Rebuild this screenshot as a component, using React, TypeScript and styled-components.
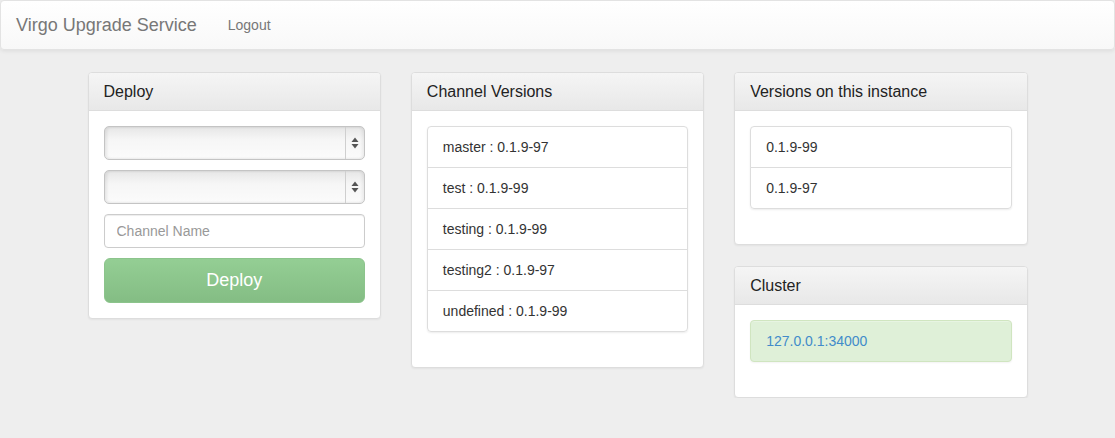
import * as React from "react";
import styled, { createGlobalStyle } from "styled-components";

const GlobalStyle = createGlobalStyle`
  body {
    margin: 0;
    background: #eeeeee;
    font-family: "Liberation Sans", Arial, sans-serif;
    font-size: 14px;
    color: #333;
  }
`;

const Navbar = styled.nav`
  display: flex;
  align-items: center;
  height: 48px;
  margin-bottom: 22px;
  border: 1px solid #e3e3e3;
  border-radius: 4px;
  background: linear-gradient(#ffffff, #f8f8f8);
  box-shadow: 0 1px 4px rgba(0, 0, 0, 0.08), inset 0 1px 0 rgba(255, 255, 255, 0.15);
`;

const Brand = styled.a`
  padding: 0 16px 0 15px;
  font-size: 18px;
  color: #777;
  text-decoration: none;
`;

const NavLink = styled.a`
  padding: 0 15px;
  font-size: 14px;
  color: #777;
  text-decoration: none;
`;

const Container = styled.div`
  width: 940px;
  margin: 0 auto;
  display: grid;
  grid-template-columns: repeat(3, 1fr);
  column-gap: 30px;
  align-items: start;
`;

const Column = styled.div`
  display: flex;
  flex-direction: column;
  gap: 21px;
`;

const Panel = styled.section`
  background: #fff;
  border: 1px solid #dddddd;
  border-radius: 4px;
  box-shadow: 0 1px 2px rgba(0, 0, 0, 0.05);
`;

const PanelHeading = styled.div`
  padding: 10px 15px;
  border-bottom: 1px solid #dddddd;
  border-radius: 3px 3px 0 0;
  background: linear-gradient(#f5f5f5, #e8e8e8);
`;

const PanelTitle = styled.h3`
  margin: 0;
  font-size: 16px;
  font-weight: normal;
  line-height: 17px;
  color: #222;
`;

const PanelBody = styled.div`
  padding: 15px;
`;

const Form = styled.form`
  display: flex;
  flex-direction: column;
  gap: 10px;
  margin: 0;
`;

const SelectBox = styled.div`
  display: flex;
  height: 34px;
  box-sizing: border-box;
  border: 1px solid #c4c4c4;
  border-radius: 5px;
  background: linear-gradient(#e6e6e6, #f6f6f6 40%, #fbfbfb);
  box-shadow: inset 2px 0 3px rgba(0, 0, 0, 0.08), inset -2px 0 3px rgba(0, 0, 0, 0.06);
`;

const SelectValue = styled.div`
  flex: 1;
`;

const SelectArrows = styled.div`
  width: 18px;
  border-left: 1px solid #cfcfcf;
  display: flex;
  align-items: center;
  justify-content: center;
`;

const Input = styled.input`
  height: 34px;
  box-sizing: border-box;
  padding: 6px 12px;
  border: 1px solid #cccccc;
  border-radius: 4px;
  font-family: inherit;
  font-size: 14px;
  color: #555;
  box-shadow: inset 0 1px 1px rgba(0, 0, 0, 0.075);
  &::placeholder {
    color: #999;
  }
`;

const DeployButton = styled.button`
  height: 45px;
  border: 1px solid #8cc48c;
  border-radius: 6px;
  background: linear-gradient(#94ce94, #84bd84);
  color: #fff;
  font-family: inherit;
  font-size: 18px;
  cursor: pointer;
`;

const ListGroup = styled.ul`
  margin: 0 0 20px;
  padding: 0;
  list-style: none;
  border-radius: 4px;
  box-shadow: 0 1px 2px rgba(0, 0, 0, 0.075);
`;

const ListItem = styled.li`
  padding: 10px 15px;
  line-height: 20px;
  border: 1px solid #dddddd;
  margin-bottom: -1px;
  &:first-child {
    border-radius: 4px 4px 0 0;
  }
  &:last-child {
    margin-bottom: 0;
    border-radius: 0 0 4px 4px;
  }
`;

const Alert = styled.div`
  margin-bottom: 20px;
  padding: 10px 15px;
  line-height: 20px;
  background: #dff0d8;
  border: 1px solid #d0e5c0;
  border-radius: 4px;
  box-shadow: inset 0 1px 0 rgba(255, 255, 255, 0.25), 0 1px 2px rgba(0, 0, 0, 0.05);
`;

const AlertLink = styled.a`
  color: #428bca;
  text-decoration: none;
`;

function Arrows() {
  return (
    <svg width="8" height="12" viewBox="0 0 8 12">
      <path d="M4 0.5 L7.5 5 L0.5 5 Z" fill="#555" />
      <path d="M4 11.5 L7.5 7 L0.5 7 Z" fill="#555" />
    </svg>
  );
}

function Select() {
  return (
    <SelectBox>
      <SelectValue />
      <SelectArrows>
        <Arrows />
      </SelectArrows>
    </SelectBox>
  );
}

function Card(props: { title: string; children: React.ReactNode }) {
  return (
    <Panel>
      <PanelHeading>
        <PanelTitle>{props.title}</PanelTitle>
      </PanelHeading>
      <PanelBody>{props.children}</PanelBody>
    </Panel>
  );
}

const channels = [
  "master : 0.1.9-97",
  "test : 0.1.9-99",
  "testing : 0.1.9-99",
  "testing2 : 0.1.9-97",
  "undefined : 0.1.9-99",
];

const versions = ["0.1.9-99", "0.1.9-97"];

export default function App() {
  return (
    <>
      <GlobalStyle />
      <Navbar>
        <Brand href="#">Virgo Upgrade Service</Brand>
        <NavLink href="#">Logout</NavLink>
      </Navbar>
      <Container>
        <Column>
          <Card title="Deploy">
            <Form onSubmit={(e) => e.preventDefault()}>
              <Select />
              <Select />
              <Input placeholder="Channel Name" />
              <DeployButton type="submit">Deploy</DeployButton>
            </Form>
          </Card>
        </Column>
        <Column>
          <Card title="Channel Versions">
            <ListGroup>
              {channels.map((c) => (
                <ListItem key={c}>{c}</ListItem>
              ))}
            </ListGroup>
          </Card>
        </Column>
        <Column>
          <Card title="Versions on this instance">
            <ListGroup>
              {versions.map((v) => (
                <ListItem key={v}>{v}</ListItem>
              ))}
            </ListGroup>
          </Card>
          <Card title="Cluster">
            <Alert>
              <AlertLink href="#">127.0.0.1:34000</AlertLink>
            </Alert>
          </Card>
        </Column>
      </Container>
    </>
  );
}
